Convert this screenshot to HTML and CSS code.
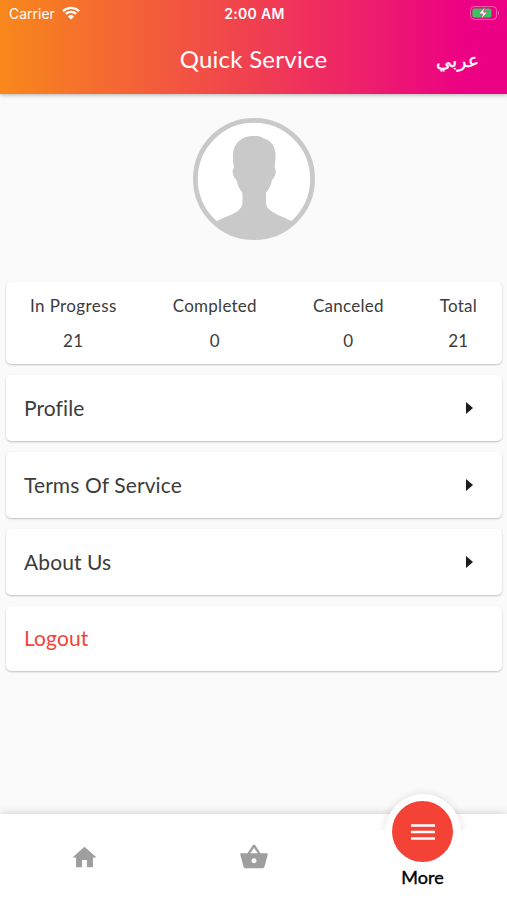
FILE: index.html
```html
<!DOCTYPE html>
<html lang="en">
<head>
  <meta charset="UTF-8">
  <meta name="viewport" content="width=device-width, initial-scale=1.0">
  <title>Quick Service</title>
  <link rel="stylesheet" href="styles.css">
</head>
<body>
  <header class="top">
    <div class="status">
      <div class="carrier">
        <span>Carrier</span>
        <svg width="18" height="14" viewBox="0 0 18 14">
          <path d="M1 5.1a11.4 11.4 0 0 1 16 0M3.8 8a7.4 7.4 0 0 1 10.4 0" fill="none" stroke="#fff" stroke-width="2.3"/>
          <path d="M9 13.6L5.9 10.4a4.4 4.4 0 0 1 6.2 0z" fill="#fff"/>
        </svg>
      </div>
      <span class="time">2:00 AM</span>
      <svg class="battery" width="30" height="14" viewBox="0 0 30 14">
        <rect x=".6" y=".6" width="26" height="12.8" rx="3.6" fill="none" stroke="#f560b0" stroke-width="1"/>
        <rect x="2.4" y="2.4" width="19" height="9.2" rx="2" fill="#38c75d"/>
        <path d="M28 4.8v4.4c1.6-.7 1.6-3.7 0-4.4z" fill="#f560b0"/>
        <path d="M14.7 1.2L8.6 8h4l-1.2 5 6.2-6.8h-4z" fill="#fff" stroke="#d92c83" stroke-width=".7"/>
      </svg>
    </div>
    <div class="bar">
      <h1>Quick Service</h1>
      <a class="lang" lang="ar" dir="rtl">عربي</a>
    </div>
  </header>

  <main>
    <svg class="avatar" width="122" height="122" viewBox="0 0 122 122">
      <clipPath id="round"><circle cx="61" cy="61" r="60"/></clipPath>
      <circle cx="61" cy="61" r="58.6" fill="#fff" stroke="#c9c9c9" stroke-width="4.8"/>
      <path clip-path="url(#round)" fill="#c9c9c9" d="M60 18c4 0 8 0 10 2 7 2 12 7 12.500 16 .2 5-.5 10-1 14 2.500 2 1 9-2.500 12-.8 5-3 9-6 13v10c0 6 8 10 13 12.500 7 3 13 5 17 9.500v20H18v-20c6-4.500 11-6.500 17-9C41 95.500 49 92 49.500 85V75c-3-4-5-8-6-13-4-3-5-10-2.500-12-.8-4-1.200-9-1-14C40.500 25 49 18 60 18z"/>
    </svg>

    <section class="card stats">
      <div class="stat"><span>In Progress</span><span>21</span></div>
      <div class="stat"><span>Completed</span><span>0</span></div>
      <div class="stat"><span>Canceled</span><span>0</span></div>
      <div class="stat"><span>Total</span><span>21</span></div>
    </section>

    <a class="card item">Profile <i class="arrow"></i></a>
    <a class="card item">Terms Of Service <i class="arrow"></i></a>
    <a class="card item">About Us <i class="arrow"></i></a>
    <a class="card item logout">Logout</a>
  </main>

  <nav class="tabs">
    <a class="tab">
      <svg width="29" height="29" viewBox="0 0 24 24"><path d="M10 20v-6h4v6h5v-8h3L12 3 2 12h3v8z"/></svg>
    </a>
    <a class="tab">
      <svg width="30" height="30" viewBox="0 0 24 24"><path d="M17.210 9l-4.380-6.560c-.19-.28-.51-.42-.83-.42-.32 0-.64.14-.83.43L6.790 9H2c-.55 0-1 .45-1 1 0 .09.010.18.040.27l2.540 9.270c.23.84 1 1.460 1.920 1.460h13c.92 0 1.690-.62 1.930-1.460l2.540-9.270L23 10c0-.55-.45-1-1-1h-4.790zM9 9l3-4.400L15 9H9zm3 8c-1.100 0-2-.9-2-2s.9-2 2-2 2 .9 2 2-.9 2-2 2z"/></svg>
    </a>
    <a class="tab active">
      <span class="bump"></span>
      <span class="fab">
        <svg width="24" height="18" viewBox="0 0 24 18"><path d="M0 2.500h24M0 9h24M0 15.500h24" stroke="#fff" stroke-width="2.700"/></svg>
      </span>
      <span class="label">More</span>
    </a>
  </nav>
</body>
</html>
```
FILE: styles.css
```css
* {
  box-sizing: border-box;
}
body {
  margin: 0;
  height: 900px;
  display: flex;
  flex-direction: column;
  background-color: #fafafa;
  color: #3c3c3c;
  font-family: Lato, "Noto Sans", sans-serif;
  overflow: hidden;
}
.top {
  height: 94px;
  background: linear-gradient(to right, #f8881b, #f04050 50%, #ec0084 92%);
  color: #fff;
  box-shadow: 0 1px 4px rgba(0,0,0,0.3);
}
.status {
  height: 26px;
  padding: 0 7px 0 9px;
  display: grid;
  grid-template-columns: 1fr auto 1fr;
  align-items: center;
  font-family: Inter, sans-serif;
  font-size: 14px;
}
.carrier {
  display: flex;
  align-items: center;
  gap: 7px;
}
.time {
  font-weight: 600;
  font-size: 14px;
  letter-spacing: 0.3px;
}
.battery {
  justify-self: end;
}
.bar {
  height: 66px;
  padding: 0 28px;
  display: grid;
  grid-template-columns: 1fr auto 1fr;
  align-items: center;
}
.bar h1 {
  grid-column: 2;
  margin: 0;
  padding-bottom: 1px;
  font-size: 24px;
  font-weight: 400;
  letter-spacing: 0.25px;
}
.lang {
  justify-self: end;
  padding-top: 2px;
  font-family: "DejaVu Sans", sans-serif;
  font-size: 19px;
  -webkit-text-stroke: 0.3px #fff;
}
main {
  flex: 1;
  padding: 24px 5px 0 6px;
  display: flex;
  flex-direction: column;
}
.avatar {
  align-self: center;
  margin-bottom: 42px;
}
.card {
  background-color: #fff;
  border-radius: 5px;
  box-shadow: 0 1px 2px rgba(0,0,0,0.24);
  margin-bottom: 11px;
}
.stats {
  height: 82px;
  padding: 13px 25px 0 24px;
  display: flex;
  justify-content: space-between;
  font-size: 17px;
  letter-spacing: 0.25px;
}
.stat {
  display: flex;
  flex-direction: column;
  align-items: center;
  gap: 13px;
  line-height: 22px;
}
.stat:first-child {
  letter-spacing: 0.4px;
}
.item {
  height: 66px;
  padding: 0 29px 2px 18px;
  display: flex;
  align-items: center;
  justify-content: space-between;
  font-size: 21px;
  letter-spacing: 0.1px;
}
.logout {
  height: 65px;
  color: #f44336;
}
.arrow {
  margin-top: 2px;
  border-left: 7px solid #1c1c1c;
  border-top: 6px solid transparent;
  border-bottom: 6px solid transparent;
}
.tabs {
  height: 86px;
  display: grid;
  grid-template-columns: repeat(3, 1fr);
  background-color: #fff;
  box-shadow: 0 -1px 8px rgba(0,0,0,0.16);
}
.tab {
  display: flex;
  align-items: center;
  justify-content: center;
  position: relative;
  fill: #9e9e9e;
}
.active {
  flex-direction: column;
  justify-content: flex-start;
}
/* white ring that rises out of the bar */
.bump {
  position: absolute;
  top: -20px;
  width: 76px;
  height: 76px;
  border-radius: 50%;
  background-color: #fff;
  box-shadow: 0 0 8px rgba(0,0,0,0.12);
  clip-path: inset(-10px -10px 40px);
}
.fab {
  position: relative;
  margin-top: -13px;
  width: 61px;
  height: 61px;
  flex: none;
  border-radius: 50%;
  background-color: #f44336;
  display: flex;
  align-items: center;
  justify-content: center;
}
.label {
  position: relative;
  margin-top: 3px;
  color: #000;
  font-size: 18px;
  line-height: 24px;
  -webkit-text-stroke: 0.4px #000;
}
```
